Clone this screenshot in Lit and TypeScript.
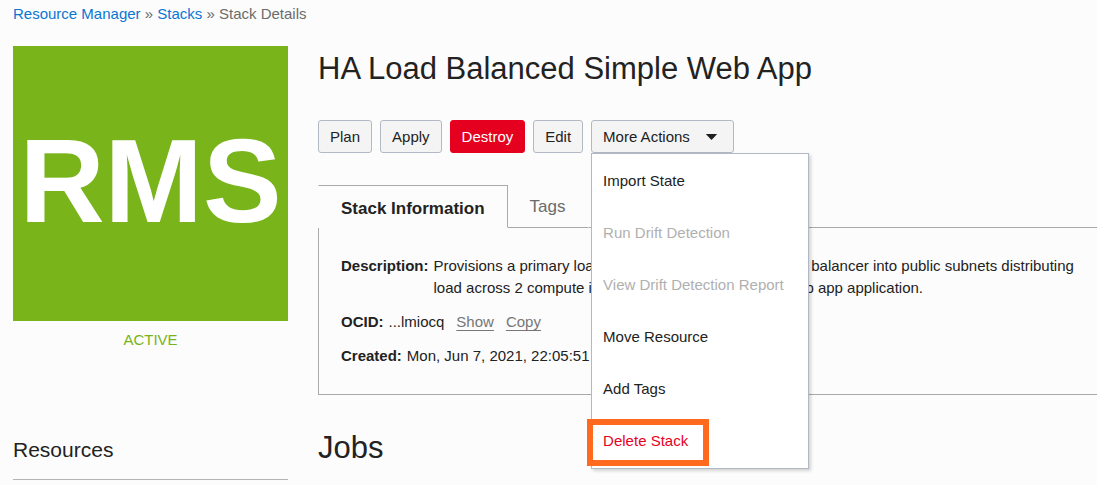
import { LitElement, html, css, nothing } from "lit";
import { customElement, property, state } from "lit/decorators.js";
import { classMap } from "lit/directives/class-map.js";

interface Action {
  label: string;
  disabled?: boolean;
  danger?: boolean;
}

const ACTIONS: Action[] = [
  { label: "Import State" },
  { label: "Run Drift Detection", disabled: true },
  { label: "View Drift Detection Report", disabled: true },
  { label: "Move Resource" },
  { label: "Add Tags" },
  { label: "Delete Stack", danger: true },
];

const buttonStyles = css`
  button {
    font: inherit;
    color: inherit;
    cursor: pointer;
  }
  .btn {
    display: flex;
    align-items: center;
    height: 33px;
    padding: 0 11px;
    border: 1px solid #b3b9c4;
    border-radius: 3px;
    background: #f4f4f4;
    white-space: nowrap;
  }
  .btn.danger {
    border-color: #e6001f;
    background: #e6001f;
    color: #fff;
  }
`;

/** Drop-down with the less frequent stack actions. */
@customElement("actions-menu")
export class ActionsMenu extends LitElement {
  @property({ attribute: false }) actions: Action[] = [];
  @state() private open = true;

  static styles = [
    buttonStyles,
    css`
      :host {
        display: block;
        position: relative;
      }
      .toggle {
        gap: 16px;
        padding-right: 16px;
      }
      .caret {
        width: 11px;
        height: 6px;
        fill: #1f1f1f;
      }
      .menu {
        position: absolute;
        z-index: 1;
        top: 100%;
        left: 0;
        width: 216px;
        margin: 0;
        padding: 1px 0;
        border: 1px solid #b3b9c4;
        background: #fff;
        box-shadow: 2px 2px 3px rgba(0, 0, 0, 0.16);
        list-style: none;
      }
      .entry {
        position: relative;
      }
      .item {
        display: block;
        width: 100%;
        height: 52px;
        padding: 0 11px;
        border: 0;
        background: none;
        text-align: left;
        white-space: nowrap;
      }
      .item:disabled {
        color: #b0b0b0;
        cursor: default;
      }
      .item.danger {
        color: #e6001f;
      }
      .marker {
        position: absolute;
        top: 4px;
        left: -5px;
        width: 122px;
        height: 47px;
        box-sizing: border-box;
        border: 6px solid #ff6a1f;
        pointer-events: none;
      }
    `,
  ];

  render() {
    return html`
      <button
        class="btn toggle"
        aria-haspopup="menu"
        aria-expanded=${this.open}
        @click=${() => (this.open = !this.open)}
      >
        More Actions
        <svg class="caret" viewBox="0 0 11 6" aria-hidden="true">
          <path d="M0.4 0H10.6Q11 0.1 10.7 0.5L6 5.6Q5.5 6 5 5.6L0.3 0.5Q0 0.1 0.4 0Z" />
        </svg>
      </button>
      ${this.open
        ? html`<ul class="menu" role="menu">
            ${this.actions.map(
              (a) => html`<li class="entry" role="none">
                <button
                  class=${classMap({ item: true, danger: !!a.danger })}
                  role="menuitem"
                  ?disabled=${!!a.disabled}
                >
                  ${a.label}
                </button>
                ${a.danger ? html`<span class="marker"></span>` : nothing}
              </li>`
            )}
          </ul>`
        : nothing}
    `;
  }
}

@customElement("app-root")
export class AppRoot extends LitElement {
  static styles = [
    buttonStyles,
    css`
      :host {
        display: block;
        box-sizing: border-box;
        min-height: 100vh;
        padding-left: 13px;
        background: #fcfcfc;
        color: #222;
        font: 15px/22px "Liberation Sans", Arial, sans-serif;
      }
      .crumbs {
        padding: 3px 0 21px;
        color: #6b6b6b;
      }
      .crumbs a {
        color: #0a76d4;
        text-decoration: none;
      }
      .layout {
        display: grid;
        grid-template-columns: 275px minmax(0, 1fr);
        column-gap: 30px;
      }
      .badge {
        display: flex;
        align-items: center;
        justify-content: center;
        box-sizing: border-box;
        aspect-ratio: 1;
        padding-bottom: 6px;
        background: #78b41a;
        color: #fff;
        font-size: 118px;
        line-height: 1;
        font-weight: bold;
      }
      .status {
        margin-top: 8px;
        color: #78b41a;
        text-align: center;
      }
      .side-title {
        margin: 84px 0 0;
        padding-bottom: 14px;
        border-bottom: 1px solid #b4b4b4;
        font-size: 21px;
        line-height: 30px;
        font-weight: normal;
      }
      .title {
        margin: 0;
        font-size: 31px;
        line-height: 46px;
        font-weight: normal;
      }
      .toolbar {
        display: flex;
        gap: 8px;
        margin: 28px 0 32px;
      }
      .tabs {
        display: flex;
      }
      .tab {
        height: 43px;
        padding: 0 22px;
        border: 1px solid transparent;
        border-bottom-color: #a9a9a9;
        background: none;
        color: #6b6b6b;
        font-size: 17px;
      }
      .tab.active {
        padding-top: 4px;
        border-color: #a9a9a9 #a9a9a9 transparent transparent;
        color: #222;
        font-weight: bold;
      }
      .tab + .tab {
        border-left: 0;
      }
      .rest {
        flex: 1;
        border-bottom: 1px solid #a9a9a9;
      }
      .panel {
        display: grid;
        gap: 12px;
        margin: 0;
        padding: 27px 20px 27px 22px;
        border: 1px solid #a9a9a9;
        border-width: 0 0 1px 1px;
      }
      .field {
        display: flex;
        gap: 5px;
      }
      .field dt {
        font-weight: bold;
      }
      .field dd {
        margin: 0;
      }
      .ocid {
        display: flex;
        gap: 12px;
      }
      .ocid a {
        color: #767676;
        text-underline-offset: 3px;
      }
      .jobs {
        margin: 30px 0 0;
        font-size: 31px;
        line-height: 46px;
        font-weight: normal;
      }
    `,
  ];

  render() {
    return html`
      <nav class="crumbs" aria-label="Breadcrumb">
        <a href="#manager">Resource Manager</a> » <a href="#stacks">Stacks</a> » Stack Details
      </nav>
      <div class="layout">
        <aside>
          <div class="badge">RMS</div>
          <div class="status">ACTIVE</div>
          <h2 class="side-title">Resources</h2>
        </aside>
        <main>
          <h1 class="title">HA Load Balanced Simple Web App</h1>
          <div class="toolbar">
            <button class="btn">Plan</button>
            <button class="btn">Apply</button>
            <button class="btn danger">Destroy</button>
            <button class="btn">Edit</button>
            <actions-menu .actions=${ACTIONS}></actions-menu>
          </div>
          <div class="tabs" role="tablist">
            <button class="tab active" role="tab" aria-selected="true">Stack Information</button>
            <button class="tab" role="tab" aria-selected="false">Tags</button>
            <span class="rest"></span>
          </div>
          <dl class="panel">
            <div class="field">
              <dt>Description:</dt>
              <dd>
                Provisions a primary load balancer and one failover load balancer into public subnets
                distributing load across 2 compute instances hosting the sample web app application.
              </dd>
            </div>
            <div class="field">
              <dt>OCID:</dt>
              <dd class="ocid">
                <span>...lmiocq</span><a href="#show">Show</a><a href="#copy">Copy</a>
              </dd>
            </div>
            <div class="field">
              <dt>Created:</dt>
              <dd>Mon, Jun 7, 2021, 22:05:51 UTC</dd>
            </div>
          </dl>
          <h2 class="jobs">Jobs</h2>
        </main>
      </div>
    `;
  }
}
